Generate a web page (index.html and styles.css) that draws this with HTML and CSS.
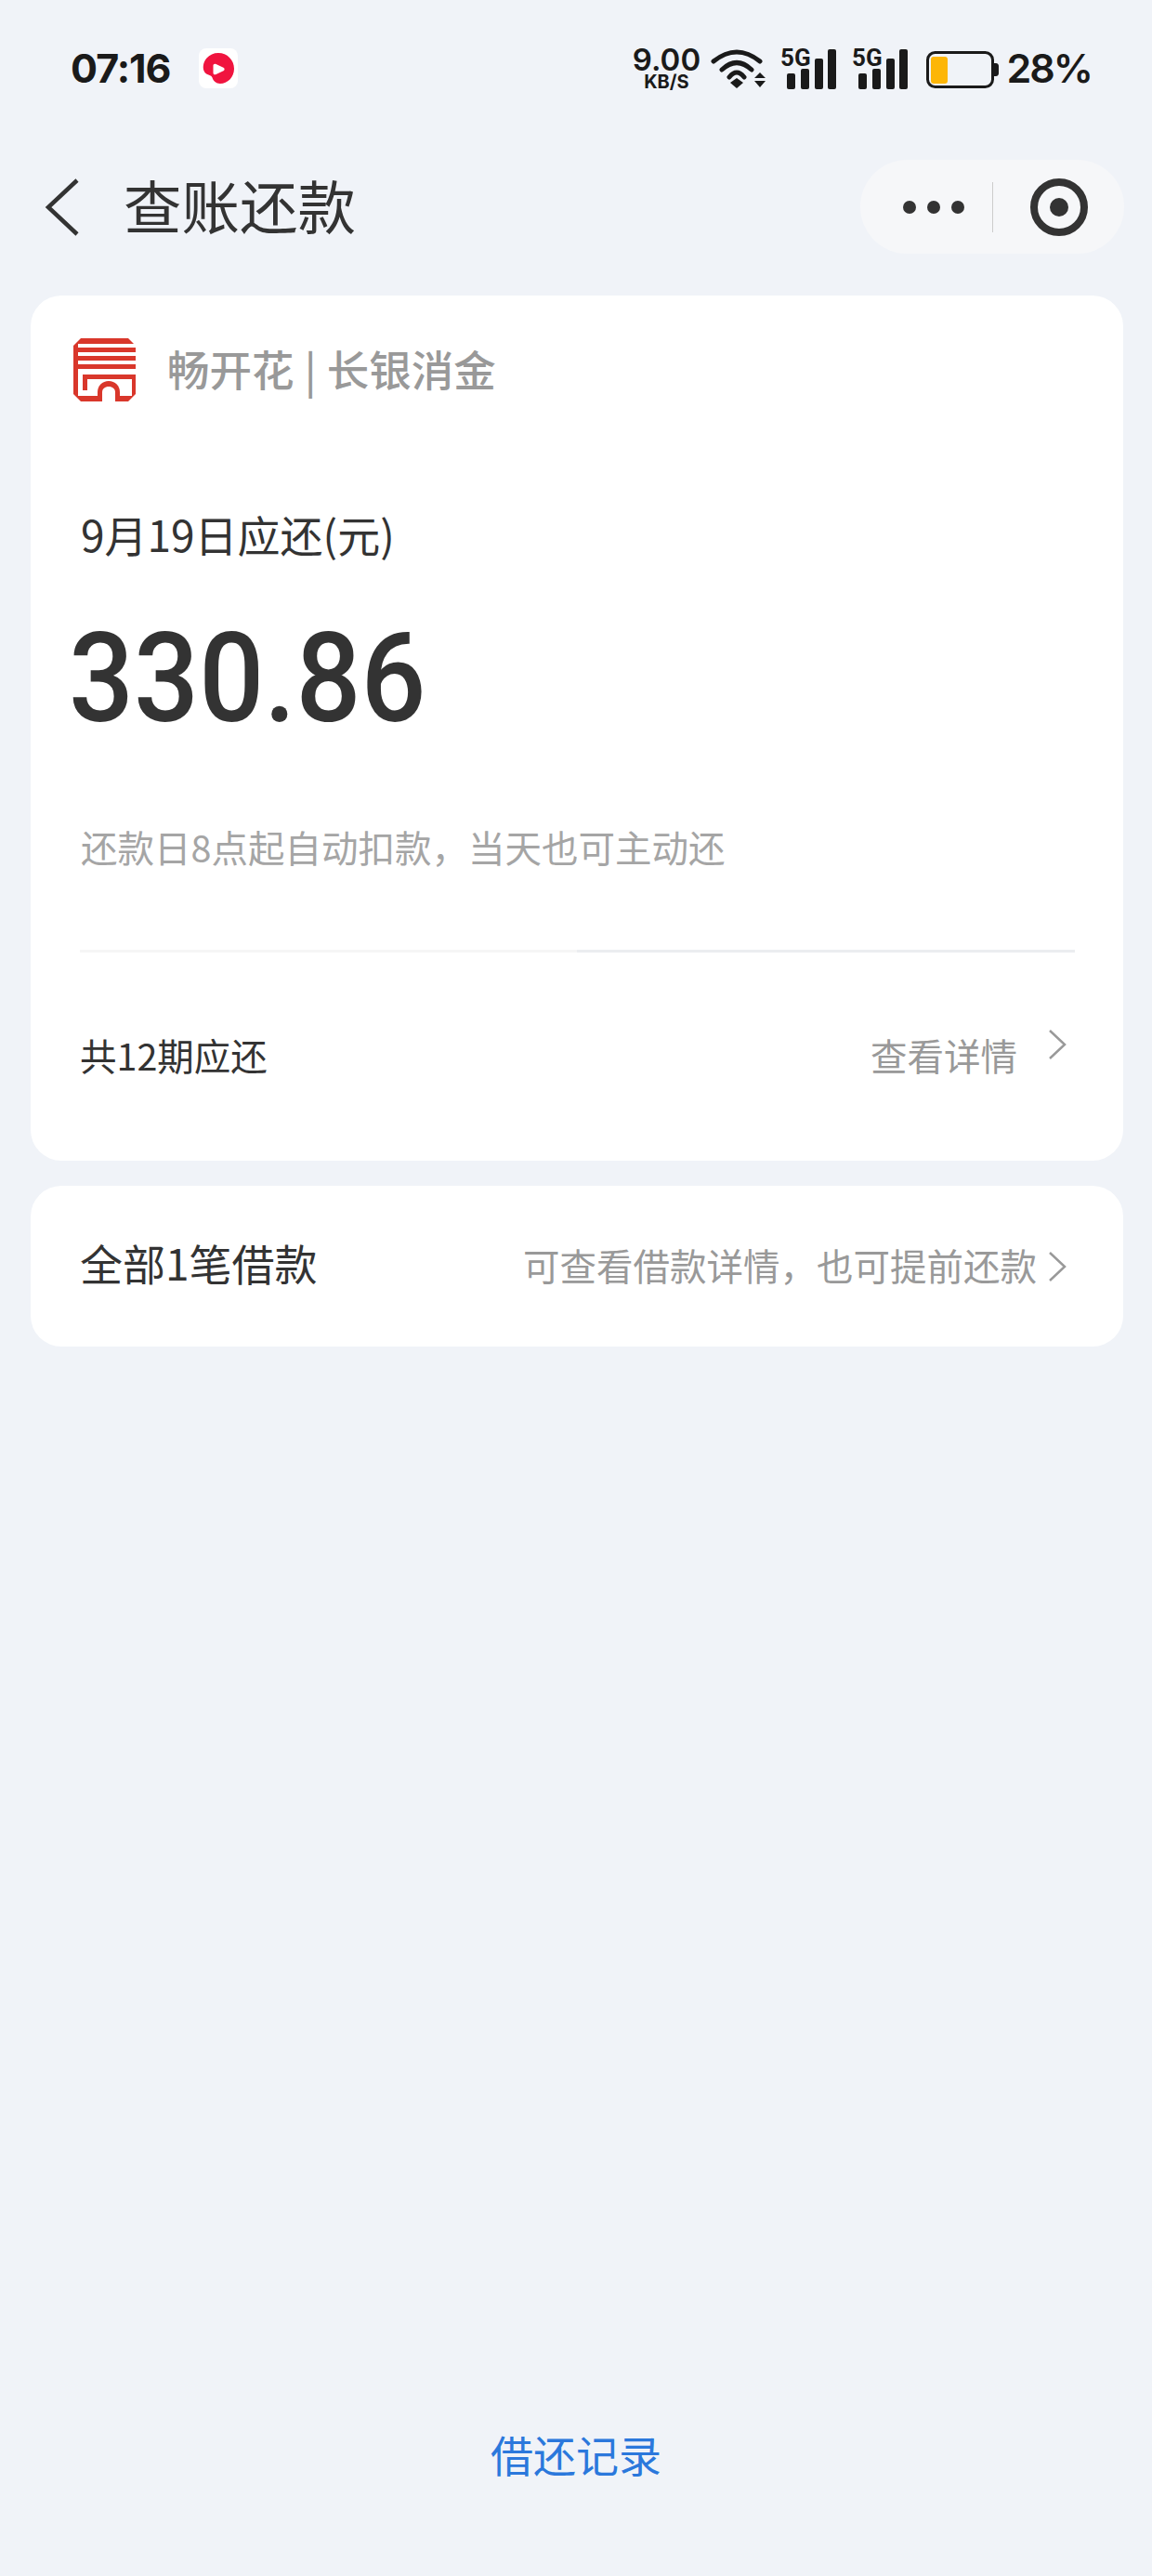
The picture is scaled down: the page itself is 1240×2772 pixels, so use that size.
FILE: index.html
```html
<!DOCTYPE html>
<html lang="zh-CN">
<head>
    <meta charset="UTF-8">
    <meta name="viewport" content="width=device-width, initial-scale=1.0">
    <title>查账还款</title>
    <link rel="stylesheet" href="styles.css">
</head>
<body>
    <div class="page">
        <!-- Status bar -->
        <div class="status-bar">
            <div class="status-left">
                <span class="time">07:16</span>
                <svg class="app-icon" viewBox="0 0 42 43">
                    <rect width="42" height="43" rx="8" fill="#fff"/>
                    <path d="M21 5C30.500 5 38 12.500 38 22C38 31 31 38 23 38C18.500 38 15.500 35 14.500 31.500C13.500 28.500 9 29 6.500 26C3.500 22 4.500 15 8.500 10.500C11.500 7 16 5 21 5Z" fill="#f0143f"/>
                    <path d="M15.500 18.500C15.500 17 17 16.200 18.500 17L26.500 20.700C28 21.500 28 23.500 26.500 24.300L18.500 28C17 28.800 15.500 28 15.500 26.500Z" fill="#fff"/>
                </svg>
            </div>
            <div class="status-right">
                <div class="speed">
                    <span class="speed-num">9.00</span>
                    <span class="speed-unit">KB/S</span>
                </div>
                <svg class="wifi-icon" viewBox="0 0 60 42">
                    <path d="M3 13Q28 -7 53 13M12 22Q28 7 44 22M20 30Q28 20 36 30" fill="none" stroke="#1a1a1a" stroke-width="5" stroke-linecap="round"/>
                    <path d="M28 42L21 36L28 31L35 36Z" fill="#1a1a1a"/>
                    <path d="M53 25L59 31H47ZM47 34H59L53 41Z" fill="#1a1a1a"/>
                </svg>
                <svg class="signal-icon" viewBox="0 -8 60 52">
                    <text class="signal-text" x="0" y="19">5G</text>
                    <rect x="7" y="27" width="9" height="17" rx="2"/>
                    <rect x="22" y="22" width="9" height="22" rx="2"/>
                    <rect x="37" y="11" width="9" height="33" rx="2"/>
                    <rect x="51" y="1" width="9" height="43" rx="2"/>
                </svg>
                <svg class="signal-icon" viewBox="0 -8 60 52">
                    <text class="signal-text" x="0" y="19">5G</text>
                    <rect x="7" y="27" width="9" height="17" rx="2"/>
                    <rect x="22" y="22" width="9" height="22" rx="2"/>
                    <rect x="37" y="11" width="9" height="33" rx="2"/>
                    <rect x="51" y="1" width="9" height="43" rx="2"/>
                </svg>
                <svg class="battery-icon" viewBox="0 0 78 40">
                    <rect x="1.500" y="1.500" width="70" height="37" rx="8" fill="none" stroke="#1a1a1a" stroke-width="3"/>
                    <rect x="5" y="6" width="18" height="29" rx="3" fill="#fdb607"/>
                    <path d="M73 13H75C77 13 78 14.500 78 16V24C78 25.500 77 27 75 27H73Z" fill="#1a1a1a"/>
                </svg>
                <span class="battery-num">28%</span>
            </div>
        </div>

        <!-- Title bar -->
        <div class="nav-bar">
            <svg class="back-icon" viewBox="0 0 38 62">
                <path d="M35 2L4 31L35 60" fill="none" stroke="#333" stroke-width="4.500"/>
            </svg>
            <h1 class="nav-title">查账还款</h1>
            <div class="capsule">
                <div class="capsule-dots">
                    <span class="dot"></span>
                    <span class="dot"></span>
                    <span class="dot"></span>
                </div>
                <div class="capsule-line"></div>
                <div class="capsule-target">
                    <span class="target-dot"></span>
                </div>
            </div>
        </div>

        <!-- Bill card -->
        <div class="card bill-card">
            <div class="brand">
                <svg class="brand-logo" viewBox="0 0 67 68">
                    <path d="M8 0H59L67 8V60L59 68H8L0 60V8Z" fill="#d9372b"/>
                    <path d="M5 6H67V10H5ZM5 15H67V19H5ZM5 24H67V28H5Z" fill="#fff"/>
                    <path d="M5 33H67V39H63V62H5Z" fill="#fff"/>
                    <path d="M10 39H63V44H15V56H10Z" fill="#d9372b"/>
                    <path d="M26 62V58C26 51 31 46 38 46C45 46 50 51 50 58V62Z" fill="#d9372b"/>
                    <path d="M31 68V58C31 54.500 34 52 38 52C42 52 45 54.500 45 58V68Z" fill="#fff"/>
                </svg>
                <span class="brand-name">畅开花 | 长银消金</span>
            </div>
            <div class="due-label">9月19日应还(元)</div>
            <div class="due-amount">330.86</div>
            <div class="due-hint">还款日8点起自动扣款，当天也可主动还</div>
            <div class="divider"></div>
            <div class="row bill-row">
                <span class="row-title">共12期应还</span>
                <span class="row-link">查看详情</span>
                <svg class="chevron" viewBox="0 0 20 32">
                    <path d="M2 1L18 16L2 31" fill="none" stroke="#999" stroke-width="2.500"/>
                </svg>
            </div>
        </div>

        <!-- Loans card -->
        <div class="card loan-card">
            <div class="row loan-row">
                <span class="loan-title">全部1笔借款</span>
                <span class="row-link">可查看借款详情，也可提前还款</span>
                <svg class="chevron" viewBox="0 0 20 32">
                    <path d="M2 1L18 16L2 31" fill="none" stroke="#999" stroke-width="2.500"/>
                </svg>
            </div>
        </div>

        <div class="footer-link">借还记录</div>
    </div>
</body>
</html>
```

FILE: styles.css
```css
* {
    box-sizing: border-box;
}

body {
    margin: 0;
    padding: 0;
    background-color: #f0f3f8;
    font-family: "Noto Sans CJK SC", "Noto Sans", sans-serif;
    color: #333;
}

.page {
    min-height: 2772px;
    display: flex;
    flex-direction: column;
}

/* Status bar */
.status-bar {
    height: 146px;
    padding: 0 65px 0 76px;
    display: flex;
    justify-content: space-between;
    align-items: center;
    font-family: Inter, "Liberation Sans", sans-serif;
    color: #1a1a1a;
}

.status-left {
    display: flex;
    align-items: center;
}

.time {
    font-size: 43px;
    font-weight: 700;
    letter-spacing: -1px;
}

.app-icon {
    width: 42px;
    height: 43px;
    margin-left: 30px;
}

.status-right {
    display: flex;
    align-items: center;
}

.speed {
    width: 72px;
    display: flex;
    flex-direction: column;
    align-items: center;
}

.speed-num {
    font-size: 33px;
    font-weight: 600;
    line-height: 29px;
}

.speed-unit {
    font-size: 20px;
    font-weight: 700;
    line-height: 18px;
}

.wifi-icon {
    width: 60px;
    height: 42px;
    margin: 2px 0 0 12px;
}

.signal-icon {
    width: 60px;
    height: 52px;
    margin: -6px 0 0 15px;
    fill: #1a1a1a;
}

.signal-icon + .signal-icon {
    margin-left: 17px;
}

.signal-text {
    font-family: "Liberation Sans Narrow", Roboto, sans-serif;
    font-size: 26px;
    font-weight: 700;
}

.battery-icon {
    width: 78px;
    height: 40px;
    margin: 3px 0 0 20px;
}

.battery-num {
    margin-left: 8px;
    font-size: 43px;
    font-weight: 600;
    letter-spacing: -2px;
}

/* Title bar */
.nav-bar {
    height: 101px;
    margin-top: 26px;
    padding: 0 30px 0 48px;
    display: flex;
    align-items: center;
}

.back-icon {
    width: 38px;
    height: 62px;
}

.nav-title {
    flex: 1;
    margin: 0 0 5px 47px;
    font-size: 62.500px;
    font-weight: 400;
    line-height: 80px;
}

.capsule {
    width: 284px;
    height: 101px;
    border-radius: 51px;
    background-color: #f6f7f9;
    display: flex;
    align-items: center;
}

.capsule-dots {
    width: 142px;
    padding-left: 46px;
    display: flex;
    gap: 12px;
}

.dot {
    width: 14px;
    height: 14px;
    border-radius: 50%;
    background-color: #333;
}

.capsule-line {
    width: 1px;
    height: 54px;
    background-color: #ccc;
}

.capsule-target {
    width: 62px;
    height: 62px;
    margin-left: 40px;
    border: 8px solid #333;
    border-radius: 50%;
    display: flex;
    justify-content: center;
    align-items: center;
}

.target-dot {
    width: 20px;
    height: 20px;
    border-radius: 50%;
    background-color: #333;
}

/* Cards */
.card {
    margin: 0 31px 0 33px;
    border-radius: 33px;
    background-color: #fff;
}

.bill-card {
    height: 931px;
    margin-top: 45px;
    padding-top: 46px;
    display: flex;
    flex-direction: column;
}

.loan-card {
    height: 173px;
    margin-top: 27px;
    display: flex;
}

.brand {
    height: 68px;
    padding-left: 46px;
    display: flex;
    align-items: center;
}

.brand-logo {
    width: 67px;
    height: 68px;
}

.brand-name {
    margin: 0 0 4px 34px;
    font-size: 45.500px;
    font-weight: 500;
    word-spacing: 1px;
    color: #999;
    white-space: pre;
}

.due-label {
    margin: 118px 0 0 54px;
    font-size: 46px;
    line-height: 48px;
}

.due-amount {
    margin: 85px 0 0 41px;
    font-family: Roboto, "Liberation Sans", sans-serif;
    font-size: 134px;
    font-weight: 500;
    line-height: 96px;
    transform: scaleX(0.92);
    transform-origin: left center;
}

.due-hint {
    margin: 112px 0 0 54px;
    font-size: 39.500px;
    line-height: 40px;
    color: #a5a5a5;
}

.divider {
    height: 3px;
    margin: 91px 52px 0 53px;
    background: linear-gradient(to right, #f6f6f6 50%, #ebedf0 50%);
}

/* Rows */
.row {
    flex: 1;
    padding: 0 61px 0 53px;
    display: flex;
    align-items: center;
}

.row-title {
    flex: 1;
    margin-bottom: 6px;
    font-size: 39.500px;
}

.loan-title {
    flex: 1;
    margin-bottom: 10px;
    font-size: 46px;
}

.row-link {
    margin-bottom: 4px;
    font-size: 39.500px;
    color: #999;
}

.chevron {
    width: 20px;
    height: 32px;
    margin-left: 12px;
}

.bill-row .row-link {
    margin-right: 21px;
    margin-bottom: 6px;
}

.bill-row .chevron {
    margin-bottom: 26px;
}

/* Footer link */
.footer-link {
    margin-top: auto;
    padding-bottom: 102px;
    font-size: 46px;
    line-height: 60px;
    text-align: center;
    color: #2b78dc;
}
```
